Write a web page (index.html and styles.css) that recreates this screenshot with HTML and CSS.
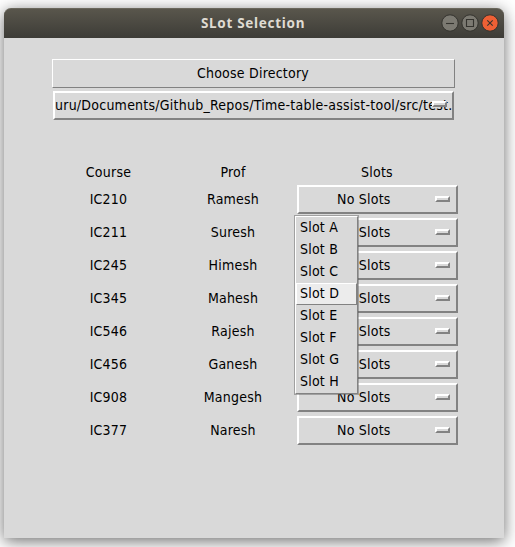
FILE: index.html
```html
<!DOCTYPE html>
<html lang="en">
<head>
<meta charset="utf-8">
<title>SLot Selection</title>
<link rel="stylesheet" href="styles.css">
</head>
<body>
<main class="window">
  <header class="titlebar">
    <h1 class="title">SLot Selection</h1>
    <div class="controls">
      <svg class="control" viewBox="0 0 18 18"><circle class="disc" cx="9" cy="9" r="8.2"/><path class="glyph" d="M5 9.5h8"/></svg>
      <svg class="control" viewBox="0 0 18 18"><circle class="disc" cx="9" cy="9" r="8.2"/><path class="glyph" d="M5.5 5.5h7v7h-7z"/></svg>
      <svg class="control close" viewBox="0 0 18 18"><circle class="disc" cx="9" cy="9" r="8.2"/><path class="glyph" d="M6.3 6.3l5.4 5.4M11.7 6.3l-5.4 5.4"/></svg>
    </div>
  </header>
  <div class="content">
    <button class="choose">Choose Directory</button>
    <button class="option path"><span class="path-text">uru/Documents/Github_Repos/Time-table-assist-tool/src/test.</span><i class="indicator"></i></button>
    <section class="table">
      <div class="row head"><span>Course</span><span>Prof</span><span>Slots</span></div>
      <div class="row"><span>IC210</span><span>Ramesh</span><button class="option"><span class="label">No Slots</span><i class="indicator"></i></button></div>
      <div class="row"><span>IC211</span><span>Suresh</span><button class="option"><span class="label">No Slots</span><i class="indicator"></i></button></div>
      <div class="row"><span>IC245</span><span>Himesh</span><button class="option"><span class="label">No Slots</span><i class="indicator"></i></button></div>
      <div class="row"><span>IC345</span><span>Mahesh</span><button class="option"><span class="label">No Slots</span><i class="indicator"></i></button></div>
      <div class="row"><span>IC546</span><span>Rajesh</span><button class="option"><span class="label">No Slots</span><i class="indicator"></i></button></div>
      <div class="row"><span>IC456</span><span>Ganesh</span><button class="option"><span class="label">No Slots</span><i class="indicator"></i></button></div>
      <div class="row"><span>IC908</span><span>Mangesh</span><button class="option"><span class="label">No Slots</span><i class="indicator"></i></button></div>
      <div class="row"><span>IC377</span><span>Naresh</span><button class="option"><span class="label">No Slots</span><i class="indicator"></i></button></div>
      <ul class="menu">
        <li>Slot A</li><li>Slot B</li><li>Slot C</li><li class="active">Slot D</li><li>Slot E</li><li>Slot F</li><li>Slot G</li><li>Slot H</li>
      </ul>
    </section>
  </div>
</main>
</body>
</html>
```

FILE: styles.css
```css
* { box-sizing: border-box; }
body {
  margin: 0;
  padding: 8px 11px 9px 4px;
  height: 547px;
  overflow: hidden;
  background: #fff;
  color: #000;
  font: 14px/20px "DejaVu Sans Condensed", "DejaVu Sans", sans-serif;
  font-stretch: condensed;
  letter-spacing: .22px;
}
.window {
  height: 530px;
  background: #d9d9d9;
  border-radius: 7px 7px 0 0;
  box-shadow: 0 3px 16px rgba(0, 0, 0, .58);
}
.titlebar {
  display: grid;
  grid-template-columns: 65px 1fr 65px;
  align-items: center;
  height: 30px;
  padding-right: 5px;
  border-top: 1px solid #69665b;
  border-radius: 7px 7px 0 0;
  background: linear-gradient(#59564c, #3d3c37);
}
.title {
  grid-column: 2;
  margin: 0;
  padding: 0 0 2px 3px;
  color: #dfdbd2;
  font: bold 13.5px/20px "Noto Sans", sans-serif;
  letter-spacing: .7px;
  text-align: center;
  white-space: nowrap;
}
.controls { display: flex; justify-content: flex-end; gap: 2px; padding-bottom: 1px; }
.control { width: 18px; height: 18px; }
.disc { fill: #7c7a72; stroke: #34332e; }
.glyph { fill: none; stroke: #34332e; stroke-width: 1.1; }
.close .disc { fill: #ee6035; }
.content { padding: 21px 46px 0 48px; }
button {
  display: block;
  margin: 0;
  padding: 0;
  border: 0 solid;
  background: #d9d9d9;
  color: #000;
  font: inherit;
  letter-spacing: inherit;
}
.choose {
  width: 403px;
  height: 29px;
  padding: 0 1px 2px 0;
  border-width: 1px;
  border-color: #fff #828282 #828282 #fff;
}
.option {
  display: flex;
  align-items: center;
  justify-content: space-between;
  width: 161px;
  height: 29px;
  padding: 0 6px 0 38px;
  border-width: 2px;
  border-color: #fff #828282 #828282 #fff;
}
.label, .path-text { padding-bottom: 2px; }
.indicator {
  position: relative;
  flex: none;
  width: 15px;
  height: 6px;
  margin-bottom: 1px;
  border: 2px solid;
  border-color: #fff #828282 #828282 #fff;
  background: #d9d9d9;
}
.path {
  width: 401px;
  margin: 3px 0 0 1px;
  padding: 0;
  justify-content: flex-start;
}
.path-text { flex: none; white-space: nowrap; letter-spacing: .24px; }
.path .indicator { margin-left: -21px; margin-bottom: 3px; }
.table {
  position: relative;
  width: 406px;
  margin-top: 42px;
}
.row {
  display: grid;
  grid-template-columns: 113px 136px 157px;
  align-items: center;
  height: 29px;
  margin-bottom: 4px;
  text-align: center;
}
.row > span { padding-bottom: 2px; }
.row .option { justify-self: end; }
.head { height: 20px; margin-bottom: 3px; }
.head > span { padding-bottom: 0; }
.head > span:last-child { padding-right: 5px; }
.menu {
  position: absolute;
  left: 243px;
  top: 54px;
  width: 63px;
  height: 178px;
  margin: 0;
  padding: 0;
  border: 1px solid;
  border-color: #fff #828282 #828282 #fff;
  background: #d9d9d9;
  list-style: none;
  box-shadow: 0 0 0 1px rgba(90, 90, 90, .45);
}
.menu li {
  height: 22px;
  padding-left: 3px;
  border: 1px solid transparent;
  line-height: 18px;
}
.menu .active {
  background: #ececec;
  border-color: #fff #828282 #828282 #fff;
}
```
